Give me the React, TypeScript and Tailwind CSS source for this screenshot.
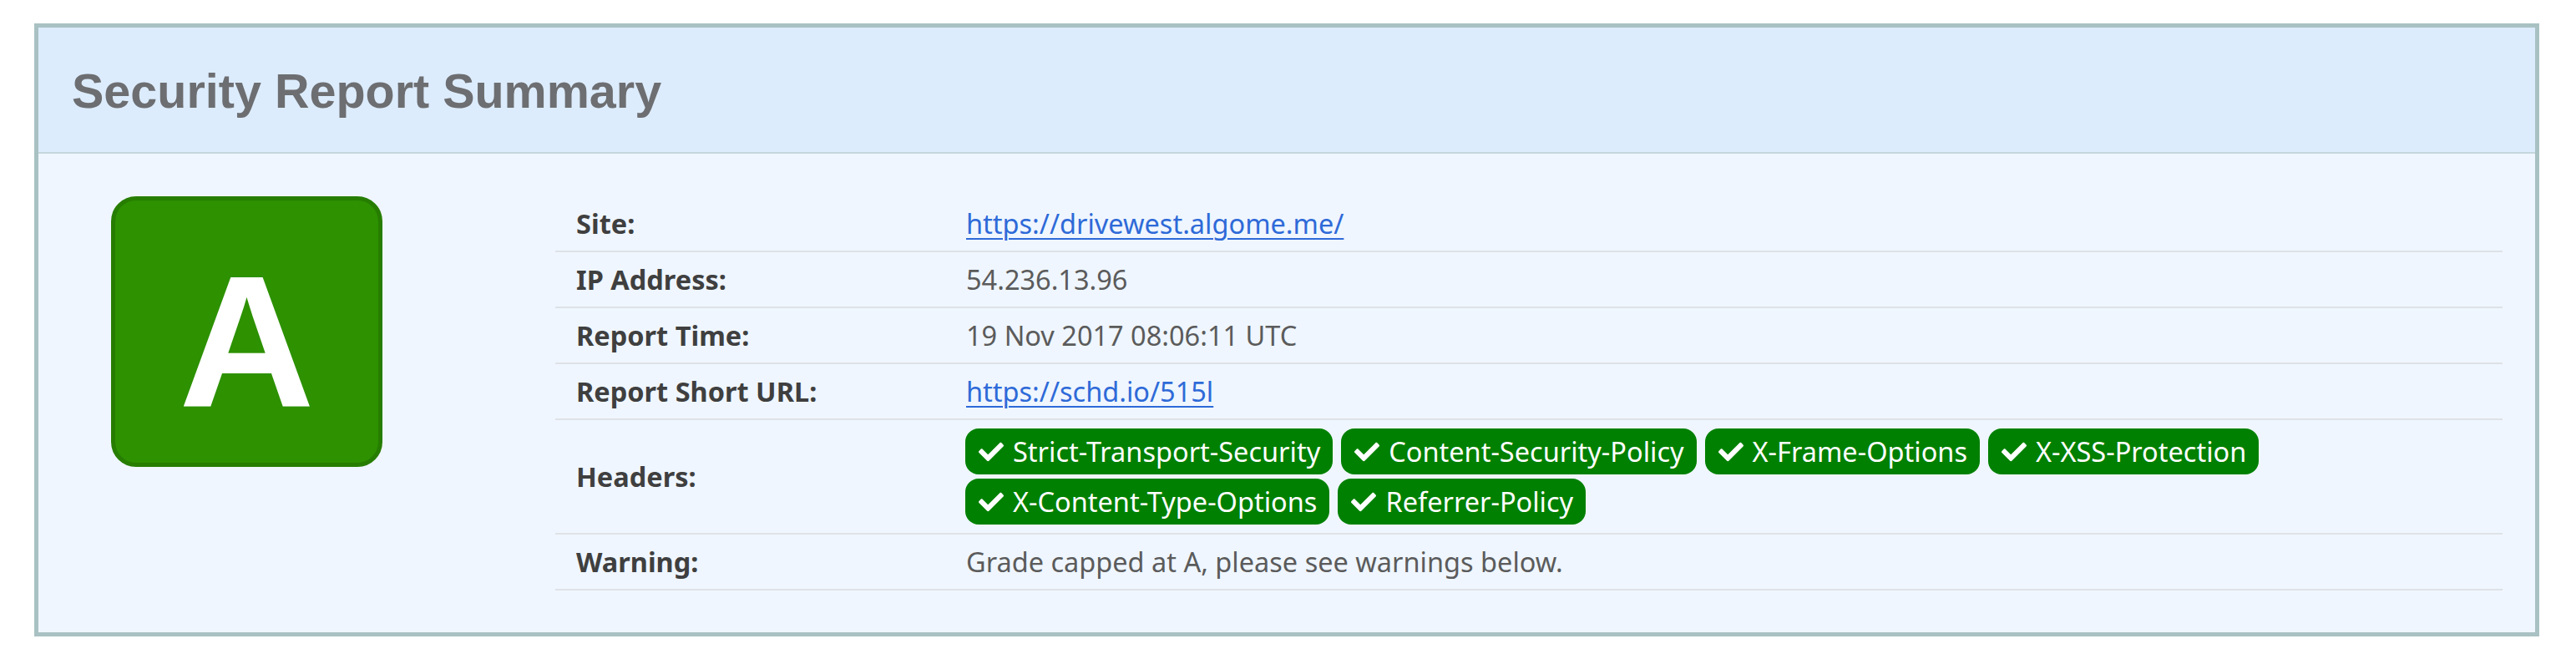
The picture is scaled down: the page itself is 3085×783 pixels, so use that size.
import { FaCheck } from 'react-icons/fa';

const headers = [
    'Strict-Transport-Security',
    'Content-Security-Policy',
    'X-Frame-Options',
    'X-XSS-Protection',
    'X-Content-Type-Options',
    'Referrer-Policy',
];

function Row({ label, children }: { label: string; children: React.ReactNode }) {
    return (
        <div className="flex items-center min-h-[67px] py-[10px] border-b-2 border-[#dee2e6]">
            <div className="w-[492px] shrink-0 pl-[25px] font-bold text-[#3f3f3f]">{label}</div>
            <div className="flex-1 text-[#5b5b5b]">{children}</div>
        </div>
    );
}

export default function App() {
    return (
        <div className="bg-white pt-[28px] pl-[41px] pb-[21px] font-['Noto_Sans',sans-serif]">
            <div className="w-[3000px] border-[5px] border-[#a9c1c3] bg-[#eff6ff]">
                {/* Header */}
                <div className="h-[151px] flex items-center pt-[4px] pl-[40px] bg-[#dcecfd] border-b-2 border-[#c5d6dc]">
                    <h1 className="font-['Liberation_Sans',Arial,sans-serif] font-bold text-[57.5px] leading-none text-[#6d6e71]">
                        Security Report Summary
                    </h1>
                </div>

                {/* Body */}
                <div className="flex pt-[51px] pb-[50px] pl-[87px] pr-[39px]">
                    <div className="shrink-0 w-[325px] h-[324px] rounded-[30px] border-[5px] border-[#267d00] bg-[#2d9100] flex items-center justify-center pt-[24px]">
                        <span className="font-['Liberation_Sans',Arial,sans-serif] font-bold text-[225px] leading-none text-white">A</span>
                    </div>

                    <div className="flex-1 ml-[207px] text-[32.5px] leading-[44px]">
                        <Row label="Site:">
                            <a href="#" className="text-[#2e6ad8] underline decoration-2 underline-offset-[5px]">
                                https://drivewest.algome.me/
                            </a>
                        </Row>
                        <Row label="IP Address:">54.236.13.96</Row>
                        <Row label="Report Time:">19 Nov 2017 08:06:11 UTC</Row>
                        <Row label="Report Short URL:">
                            <a href="#" className="text-[#2e6ad8] underline decoration-2 underline-offset-[5px]">
                                https://schd.io/515l
                            </a>
                        </Row>
                        <Row label="Headers:">
                            <div className="flex flex-wrap gap-x-[10px] gap-y-[5px] -ml-px">
                                {headers.map((h) => (
                                    <span
                                        key={h}
                                        className="h-[55px] flex items-center gap-[11px] pl-[16px] pr-[15px] rounded-[16px] bg-[#008000] text-white"
                                    >
                                        <FaCheck className="w-[30px] h-[30px]" />
                                        {h}
                                    </span>
                                ))}
                            </div>
                        </Row>
                        <Row label="Warning:">Grade capped at A, please see warnings below.</Row>
                    </div>
                </div>
            </div>
        </div>
    );
}
